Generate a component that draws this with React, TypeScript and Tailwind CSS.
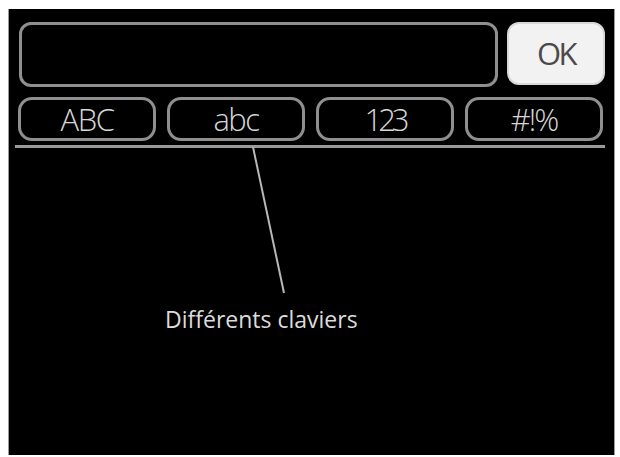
const tabs = [
  { label: "ABC", track: "tracking-[-1.5px]" },
  { label: "abc", track: "tracking-[-1.5px]" },
  { label: "123", track: "tracking-[-4px]" },
  { label: "#!%", track: "tracking-[-2px]" },
];

export default function App() {
  return (
    <div className="w-[620px] h-[457px] bg-white pl-[8px] pt-[9px]" style={{ fontFamily: '"Open Sans", "DejaVu Sans", sans-serif' }}>
      <div className="relative w-[607px] h-[446px] bg-black border-x border-[#9a9a9a] pl-[10px] pr-[9px] pt-[13px]">
        {/* Text field + OK */}
        <div className="flex gap-[9px]">
          <div className="w-[479px] h-[65px] rounded-[12px] border-[3px] border-[#8f8f8f]" />
          <button className="w-[98px] h-[63px] rounded-[12px] bg-[#f2f2f2] border-2 border-[#d8d8d8] flex items-center justify-center text-[31px] text-[#4a4a4a] tracking-[-2.5px] leading-none">
            OK
          </button>
        </div>

        {/* Keyboard tabs */}
        <div className="grid grid-cols-4 gap-[11px] mt-[10px] w-[585px] ml-[-1px]">
          {tabs.map((t) => (
            <div
              key={t.label}
              className={`h-[44px] rounded-[14px] border-[3px] border-[#8f8f8f] flex items-center justify-center text-[31px] font-light text-[#d6d6d6] leading-none ${t.track}`}
            >
              {t.label}
            </div>
          ))}
        </div>
        <div className="h-[3px] bg-[#9a9a9a] mt-[4px] ml-[-4px] w-[590px]" />

        {/* Annotation */}
        <div className="pl-[146px] pt-[160px] text-[23px] text-[#dcdcdc] leading-none">Différents claviers</div>
        <svg className="absolute left-0 top-0" width="607" height="446">
          <line x1="244" y1="138" x2="275" y2="284" stroke="#b8b8b8" strokeWidth="2" />
        </svg>
      </div>
    </div>
  );
}
